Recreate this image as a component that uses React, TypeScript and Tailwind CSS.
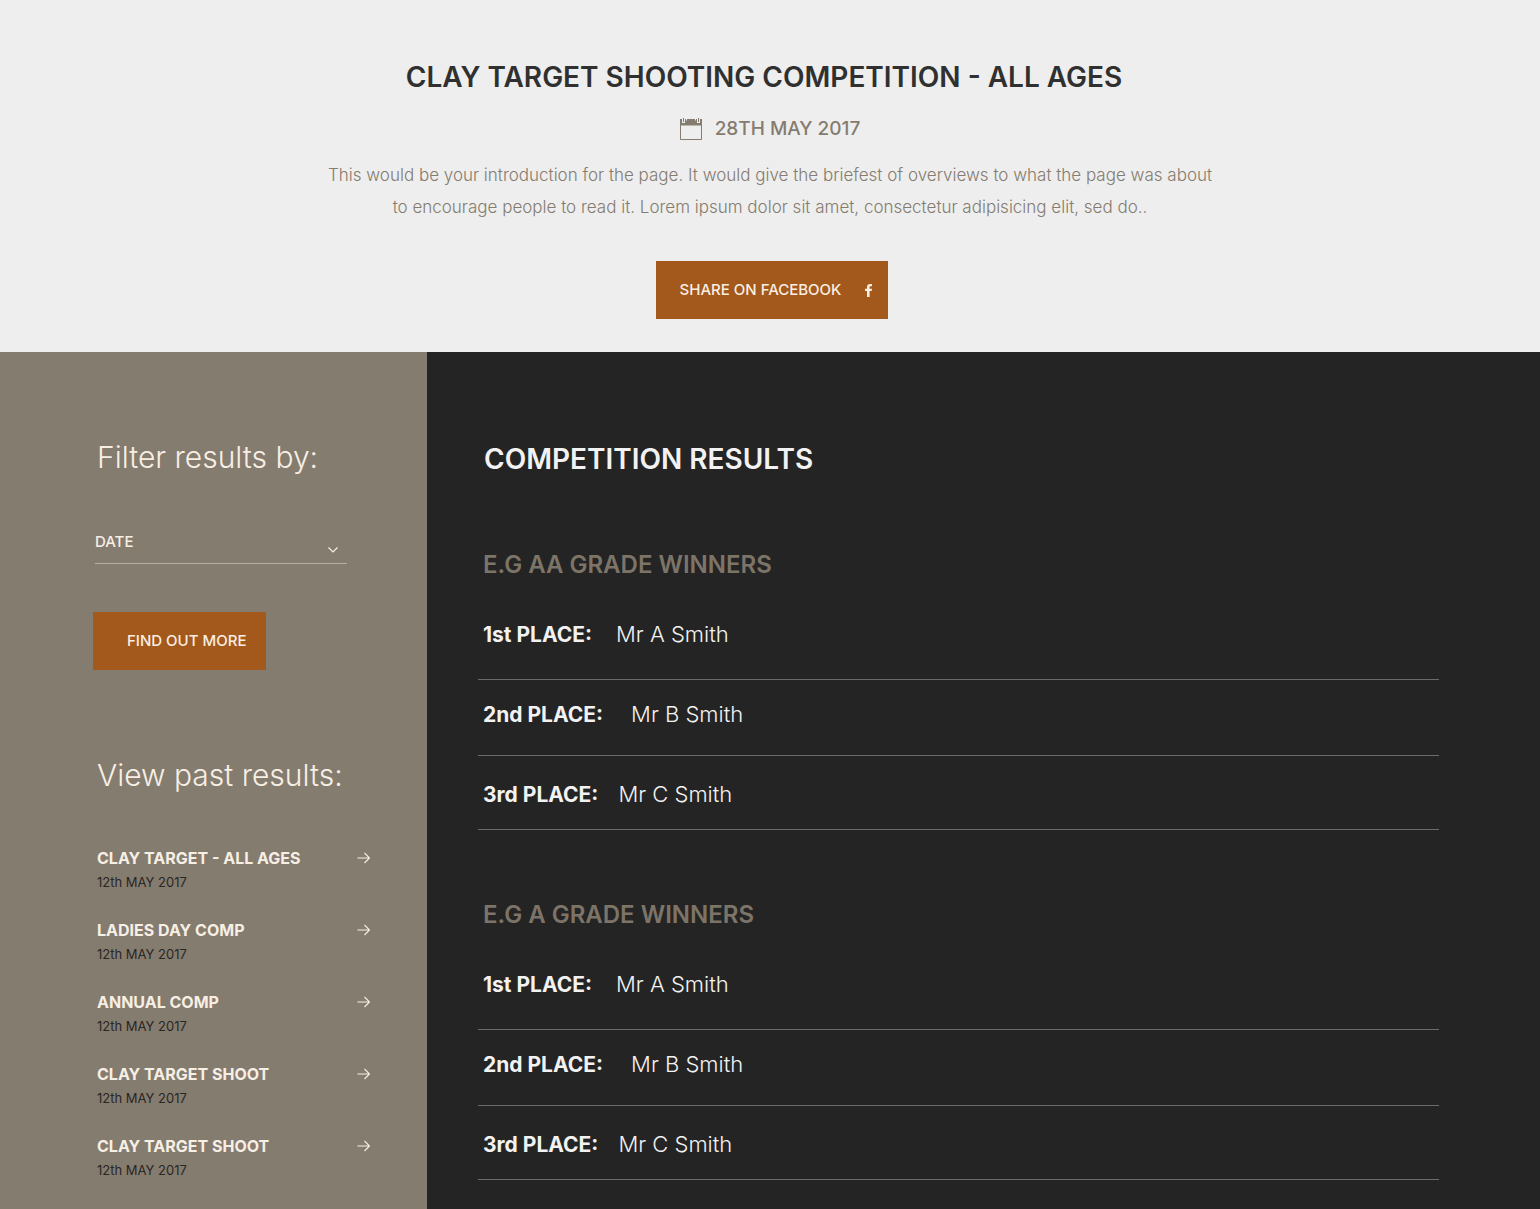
import React from "react";

const pastResults = [
  { title: "CLAY TARGET - ALL AGES", date: "12th MAY 2017" },
  { title: "LADIES DAY COMP", date: "12th MAY 2017" },
  { title: "ANNUAL COMP", date: "12th MAY 2017" },
  { title: "CLAY TARGET SHOOT", date: "12th MAY 2017" },
  { title: "CLAY TARGET SHOOT", date: "12th MAY 2017" },
];

const places = [
  { place: "1st PLACE:", name: "Mr A Smith", row: "gap-6 pb-7" },
  { place: "2nd PLACE:", name: "Mr B Smith", row: "gap-7 pt-[18px] pb-6" },
  { place: "3rd PLACE:", name: "Mr C Smith", row: "gap-5 pt-[22px] pb-[18px]" },
];

const grades = ["E.G AA GRADE WINNERS", "E.G A GRADE WINNERS"];

const CalendarIcon = () => (
  <svg width="22" height="22" viewBox="0 0 22 22" aria-hidden="true">
    <path d="M0.5 6v15.5h21V6" fill="none" stroke="#857c70" />
    <path d="M0 1h2v4h3V1h12v4h3V1h2v6.500H0z" fill="#857c70" />
    <path d="M3.500 0v4M18.500 0v4" stroke="#857c70" />
    <path d="M6.500 0v2.500M15.500 0v2.500" stroke="#eeeeee" />
  </svg>
);

const FacebookIcon = () => (
  <svg width="7" height="13" viewBox="0 0 7 13" fill="#fbeee2" aria-hidden="true">
    <path d="M2 13V7H0V4.800h2V3.200C2 1.200 3.200 0 5 0h2v2.200H5.700C5 2.200 4.600 2.500 4.600 3.200v1.600H7L6.700 7H4.600v6z" />
  </svg>
);

const ArrowIcon = () => (
  <svg
    width="13"
    height="12"
    viewBox="0 0 13 12"
    fill="none"
    stroke="#f7efe4"
    strokeWidth="1.1"
    aria-hidden="true"
  >
    <path d="M0.500 6h12M7.500 1l5 5-5 5" />
  </svg>
);

const Intro = () => (
  <header className="flex flex-col items-center bg-[#eeeeee] px-6 pt-[61px] pb-[33px] text-center">
    <h1 className="pr-3 text-[28px] leading-8 font-semibold text-[#303030]">
      CLAY TARGET SHOOTING COMPETITION - ALL AGES
    </h1>
    <div className="mt-6 flex items-center gap-[13px] text-[#857c70]">
      <CalendarIcon />
      <time dateTime="2017-05-28" className="text-[19px] leading-6 font-medium">
        28TH MAY 2017
      </time>
    </div>
    <p className="mt-[18px] max-w-[900px] text-[17px] leading-8 font-light text-[#857c70]">
      This would be your introduction for the page. It would give the briefest of overviews to what the page was about
      <br />
      to encourage people to read it. Lorem ipsum dolor sit amet, consectetur adipisicing elit, sed do..
    </p>
    <button
      type="button"
      className="mt-[38px] ml-1 flex h-[58px] items-center gap-6 bg-[#a3591b] pr-4 pl-6 text-[15px] font-medium text-[#fbeee2]"
    >
      SHARE ON FACEBOOK
      <FacebookIcon />
    </button>
  </header>
);

const Sidebar = () => (
  <aside className="w-[427px] shrink-0 bg-[#857c70] pt-[89px] pr-[57px] pb-6 pl-[93px] text-[#f7efe4]">
    <h2 className="pl-1 text-[30px] leading-8 font-light">Filter results by:</h2>
    <form>
      <div className="relative mt-12 mr-[23px] ml-0.5 border-b border-[#b8afa3]">
        <select
          aria-label="Date"
          className="block h-[42px] w-full appearance-none bg-transparent text-[15px] font-medium"
        >
          <option>DATE</option>
        </select>
        <svg
          className="pointer-events-none absolute right-[9px] bottom-2.5"
          width="10"
          height="6"
          viewBox="0 0 10 6"
          fill="none"
          stroke="#f7efe4"
          strokeWidth="1.2"
          aria-hidden="true"
        >
          <path d="M0.500 0.500L5 5l4.500-4.500" />
        </svg>
      </div>
      <button
        type="button"
        className="mt-12 h-[58px] bg-[#a3591b] pr-5 pl-[34px] text-[15px] font-medium text-[#fbeee2]"
      >
        FIND OUT MORE
      </button>
    </form>

    <h2 className="mt-[89px] pl-1 text-[30px] leading-8 font-light">View past results:</h2>
    <ul className="mt-[55px] flex flex-col gap-6 pl-1">
      {pastResults.map((item, i) => (
        <li key={i}>
          <a href="#" className="block">
            <span className="flex items-center justify-between text-base leading-6 font-bold">
              {item.title}
              <ArrowIcon />
            </span>
            <span className="block text-[13px] leading-6 text-[#2a2622]">{item.date}</span>
          </a>
        </li>
      ))}
    </ul>
  </aside>
);

const Results = () => (
  <main className="min-w-0 flex-1 bg-[#242424] pt-[91px] pr-[101px] pb-7 pl-[51px] text-[#f2f2f2]">
    <h2 className="pl-1.5 text-[28px] leading-8 font-semibold">COMPETITION RESULTS</h2>
    <div className="mt-[74px] flex flex-col gap-[69px]">
      {grades.map((grade) => (
        <section key={grade}>
          <h3 className="pl-[5px] text-2xl leading-8 font-semibold text-[#7d7468]">{grade}</h3>
          <dl className="mt-[37px]">
            {places.map(({ place, name, row }) => (
              <div key={place} className={`flex items-baseline border-b border-[#6b6b6b] pl-[5px] leading-8 ${row}`}>
                <dt className="text-[21px] font-bold">{place}</dt>
                <dd className="text-[22px] font-light">{name}</dd>
              </div>
            ))}
          </dl>
        </section>
      ))}
    </div>
  </main>
);

const App = () => {
  return (
    <div className="flex min-h-screen flex-col font-['Inter',sans-serif]">
      <Intro />
      <div className="flex flex-1">
        <Sidebar />
        <Results />
      </div>
    </div>
  );
};

export default App;
